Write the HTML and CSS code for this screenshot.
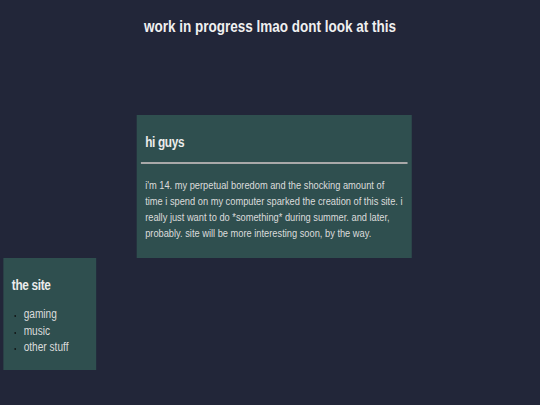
FILE: index.html
```html
<!DOCTYPE html>
<html>
<head>
<meta charset="utf-8">
<link rel="stylesheet" href="styles.css">
</head>
<body>
<div class="page">
  <h1 class="title">work in progress lmao dont look at this</h1>
  <section class="card intro">
    <h2 class="card-head">hi guys</h2>
    <hr class="rule">
    <p class="card-text">i'm 14. my perpetual boredom and the shocking amount of<br>time i spend on my computer sparked the creation of this site. i<br>really just want to do *something* during summer. and later,<br>probably. site will be more interesting soon, by the way.</p>
  </section>
  <nav class="card side">
    <h2 class="side-head">the site</h2>
    <ul class="links">
      <li>gaming</li>
      <li>music</li>
      <li>other stuff</li>
    </ul>
  </nav>
</div>
</body>
</html>
```
FILE: styles.css
```css
html, body {
  margin: 0;
  padding: 0;
}
body {
  background: #222639;
  color: #e2e2e2;
  font-family: "Liberation Sans", Arial, sans-serif;
  width: 540px;
  height: 405px;
  overflow: hidden;
}
.page {
  width: 540px;
  transform: scaleX(0.84375);
  transform-origin: 0 0;
}
.title {
  margin: 0;
  padding: 17px 0 0 100px;
  height: 115px;
  box-sizing: border-box;
  text-align: center;
  font-size: 16px;
  font-weight: bold;
  line-height: 20px;
  color: #f0f0f0;
}
.card {
  background: #2f4f4f;
  box-sizing: border-box;
}
.intro {
  margin-left: 162px;
  width: 326px;
  height: 143px;
  padding: 17px 0 0;
}
.card-head {
  margin: 0;
  padding-left: 10px;
  font-size: 14px;
  font-weight: bold;
  line-height: 20px;
  letter-spacing: -0.4px;
  color: #ececec;
}
.rule {
  margin: 10px 5px 0;
  border: 0;
  height: 2px;
  background: #a9a9a9;
}
.card-text {
  margin: 13px 0 0;
  padding: 0 0 0 10px;
  font-size: 11px;
  line-height: 16px;
  white-space: nowrap;
  color: #dcdcdc;
}
.side {
  margin-left: 4px;
  width: 110px;
  height: 112px;
  padding: 17px 10px 0;
}
.side-head {
  margin: 0;
  font-size: 14px;
  font-weight: bold;
  line-height: 20px;
  letter-spacing: -0.4px;
  color: #ececec;
}
.links {
  margin: 11px 0 0;
  padding-left: 14px;
  font-size: 12px;
  line-height: 16.5px;
  color: #dcdcdc;
}
.links li::marker {
  color: #111;
  font-size: 8px;
}
```
